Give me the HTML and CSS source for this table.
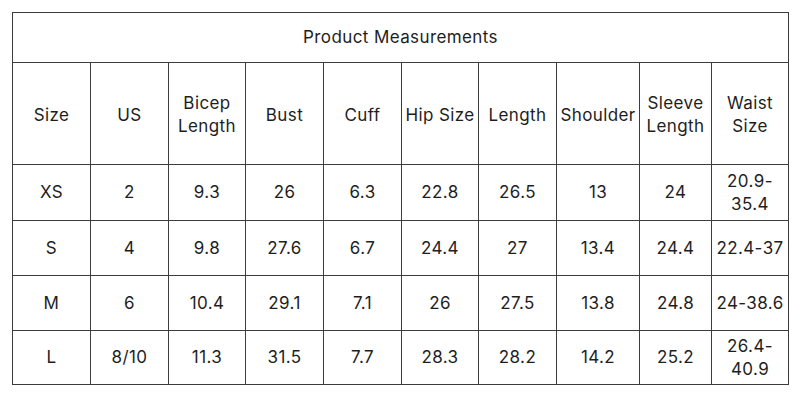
FILE: index.html
```html
<!DOCTYPE html>
<html>
<head>
<meta charset="utf-8">
<link rel="stylesheet" href="styles.css">
</head>
<body>
<table class="measure">
  <colgroup>
    <col class="c78"><col class="c78"><col class="c77"><col class="c78"><col class="c78">
    <col class="c77"><col class="c78"><col class="c83"><col class="c72"><col class="c77">
  </colgroup>
  <tr class="title-row"><td colspan="10">Product Measurements</td></tr>
  <tr class="head-row">
    <td>Size</td><td>US</td><td>Bicep<br>Length</td><td>Bust</td><td>Cuff</td>
    <td>Hip Size</td><td>Length</td><td>Shoulder</td><td>Sleeve<br>Length</td><td>Waist<br>Size</td>
  </tr>
  <tr class="data-row first">
    <td>XS</td><td>2</td><td>9.3</td><td>26</td><td>6.3</td><td>22.8</td><td>26.5</td><td>13</td><td>24</td><td>20.9-<br>35.4</td>
  </tr>
  <tr class="data-row">
    <td>S</td><td>4</td><td>9.8</td><td>27.6</td><td>6.7</td><td>24.4</td><td>27</td><td>13.4</td><td>24.4</td><td>22.4-37</td>
  </tr>
  <tr class="data-row">
    <td>M</td><td>6</td><td>10.4</td><td>29.1</td><td>7.1</td><td>26</td><td>27.5</td><td>13.8</td><td>24.8</td><td>24-38.6</td>
  </tr>
  <tr class="data-row last">
    <td>L</td><td>8/10</td><td>11.3</td><td>31.5</td><td>7.7</td><td>28.3</td><td>28.2</td><td>14.2</td><td>25.2</td><td>26.4-<br>40.9</td>
  </tr>
</table>
</body>
</html>
```

FILE: styles.css
```css
html, body {
  margin: 0;
  padding: 0;
  background: #ffffff;
}
body {
  padding: 12px 0 0 12px;
  font-family: "Inter", "Noto Sans", sans-serif;
  color: #1e1e1e;
}
.measure {
  border-collapse: collapse;
  table-layout: fixed;
  width: 777px;
  font-size: 17px;
  letter-spacing: 0.4px;
  line-height: 23px;
}
.c78 { width: 78px; }
.c77 { width: 77px; }
.c83 { width: 83px; }
.c72 { width: 72px; }
.measure td {
  border: 1px solid #3c3c3c;
  text-align: center;
  vertical-align: middle;
  padding: 0;
  box-sizing: border-box;
  white-space: nowrap;
}
.title-row td { height: 50px; }
.head-row td { height: 102px; padding-top: 3px; }
.data-row td { height: 55px; }
.data-row.first td { height: 56px; }
.data-row.last td { height: 54px; }
```
